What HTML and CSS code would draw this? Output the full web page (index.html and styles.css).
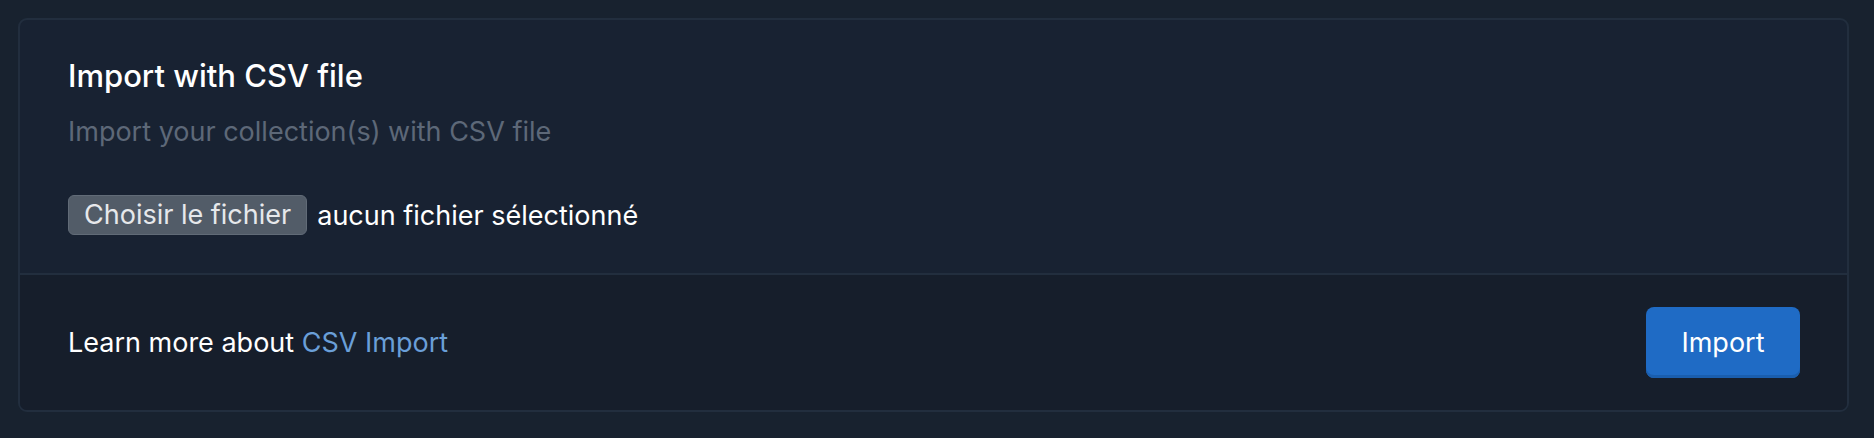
FILE: index.html
```html
<!DOCTYPE html>
<html lang="fr">
<head>
<meta charset="utf-8">
<title>Import with CSV file</title>
<link rel="stylesheet" href="styles.css">
</head>
<body>
<div class="page">
  <section class="card">
    <div class="card-body">
      <h2 class="title">Import with CSV file</h2>
      <p class="subtitle">Import your collection(s) with CSV file</p>
      <div class="file-input">
        <button type="button" class="file-btn">Choisir le fichier</button>
        <span class="file-name">aucun fichier sélectionné</span>
      </div>
    </div>
    <div class="card-footer">
      <p class="learn">Learn more about <a href="#" class="link">CSV Import</a></p>
      <button type="button" class="primary-btn">Import</button>
    </div>
  </section>
</div>
</body>
</html>
```
FILE: styles.css
```css
* { box-sizing: border-box; }
html, body {
  margin: 0;
  padding: 0;
  background: #18222f;
  font-family: Inter, "Noto Sans", "Liberation Sans", sans-serif;
  color: #ffffff;
}
.page {
  padding: 18px 25px 0 18px;
}
.card {
  border: 2px solid #222e3e;
  border-radius: 9px;
  background: #182232;
  overflow: hidden;
}
.card-body {
  padding: 36px 48px 38px 48px;
}
.title {
  margin: 0;
  font-size: 31px;
  font-weight: 500;
  line-height: 40px;
  color: #ffffff;
}
.subtitle {
  margin: 18px 0 0 0;
  font-size: 27px;
  line-height: 36px;
  color: #5d6878;
}
.file-input {
  display: flex;
  align-items: center;
  gap: 10px;
  margin-top: 45px;
}
.file-btn {
  font-family: inherit;
  font-size: 27px;
  height: 40px;
  padding: 0 15px;
  background: #525c68;
  color: #e6e8eb;
  border: 1px solid #616b77;
  border-radius: 6px;
  line-height: 38px;
}
.file-name {
  font-size: 27px;
  color: #ffffff;
}
.card-footer {
  display: flex;
  align-items: center;
  justify-content: space-between;
  border-top: 2px solid #222e3e;
  background: #161e2b;
  padding: 0 47px 0 48px;
  height: 137px;
}
.learn {
  margin: 0;
  font-size: 27px;
  color: #ffffff;
}
.link {
  color: #6a9fd8;
  text-decoration: none;
}
.primary-btn {
  font-family: inherit;
  font-size: 27px;
  width: 154px;
  height: 71px;
  background: #1f6bc5;
  color: #ffffff;
  border: none;
  border-radius: 8px;
  box-shadow: inset 0 -3px 0 #1a5eae;
}
```
